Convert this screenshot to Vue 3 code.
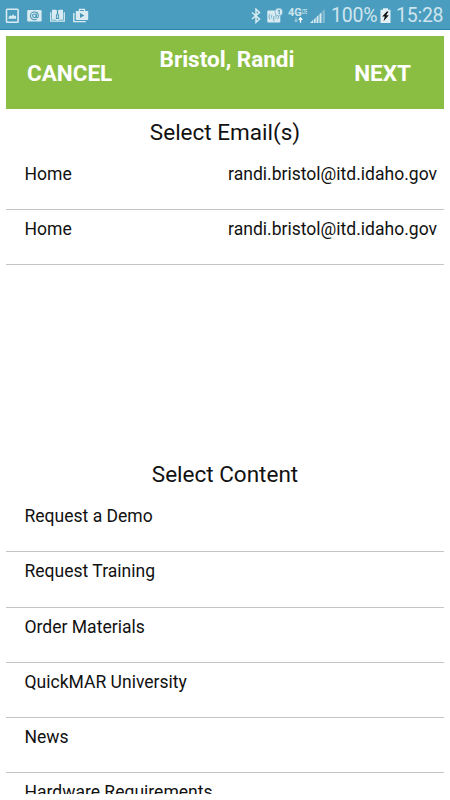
<template>
  <div class="screen">
    <div class="status-bar">
      <div class="status-left">
        <svg class="icon" width="14" height="16" viewBox="0 0 14 16">
          <rect x="1.5" y="1.2" width="11.6" height="13" rx="0.8" fill="none" stroke="#d9ebf2" stroke-width="1.6" />
          <path d="M3.6 10.7V8.9l1.7-1.7 1.2 1.1 1.5-2 1.4 1.7.8-.5.9 1.1v2.1z" fill="#d9ebf2" />
        </svg>
        <svg class="icon" width="15" height="14" viewBox="0 0 15 14">
          <rect x="0.2" y="1" width="14.4" height="11.6" rx="1.2" fill="#d9ebf2" />
          <circle cx="7.4" cy="6.8" r="1.8" fill="none" stroke="#4595b4" stroke-width="1.1" />
          <path d="M9.3 4.8v3c0 1.4 2 1.2 2-1 0-2.2-1.7-3.8-3.9-3.8S3.5 4.7 3.5 6.8s1.7 3.9 3.9 3.9c.8 0 1.5-.2 2.1-.5" fill="none" stroke="#4595b4" stroke-width="1.1" />
        </svg>
        <svg class="icon" width="15" height="14" viewBox="0 0 15 14">
          <path d="M.7 3.2v9h13.6v-9" fill="none" stroke="#d9ebf2" stroke-width="1.2" />
          <path d="M2 .7h3.9l1.6 1.2L9.1.7H13v10.1H9.1L7.5 12l-1.6-1.200H2z" fill="#d9ebf2" />
          <path d="M6.9 1.9h1.2v2.3l1 2.3v3.5H5.9V6.5l1-2.3z" fill="#4595b4" />
          <path d="M7.5 5.6v3.2M6.7 7.7l.8 1.1.8-1.1" fill="none" stroke="#d9ebf2" stroke-width=".8" />
        </svg>
        <svg class="icon" width="16" height="15" viewBox="0 0 16 15">
          <path d="M.8 5v8.6h12" fill="none" stroke="#d9ebf2" stroke-width="1.4" />
          <path d="M6.5 3.2V1.3h5v1.9" fill="none" stroke="#d9ebf2" stroke-width="1.3" />
          <rect x="2.8" y="3" width="12.4" height="8.9" rx=".6" fill="#d9ebf2" />
          <path d="M7 4.9v5.2l4.3-2.6z" fill="#4595b4" />
        </svg>
      </div>

      <div class="status-right">
        <svg class="icon bluetooth" width="10" height="16" viewBox="0 0 10 16">
          <path d="M1 4.5l7.5 6.500-3.500 3.300V1.200L8.500 4.500 1 11" fill="none" stroke="#d9ebf2" stroke-width="1.5" />
        </svg>
        <svg class="icon wifi" width="16" height="16" viewBox="0 0 16 16">
          <rect x=".3" y="2.6" width="13" height="12" rx=".8" fill="#d9ebf2" />
          <path d="M3 5.900c-1.300 2-1.300 3.800 0 5.500M5 6.800c-.7 1.300-.7 2.500 0 3.600M10.500 5.900c1.300 2 1.300 3.800 0 5.500M8.500 6.800c.7 1.300.7 2.500 0 3.600M6.800 8v5.300" fill="none" stroke="#4595b4" stroke-width=".7" />
          <circle cx="11.8" cy="4" r="3.9" fill="#d9ebf2" stroke="#4595b4" stroke-width=".5" />
          <path d="M10.900 2.900l1.300-.9v4.300" fill="none" stroke="#4595b4" stroke-width="1" />
        </svg>
        <div class="network">
          <span class="network-name">4G<small>LTE</small></span>
          <svg width="10" height="6" viewBox="0 0 10 6">
            <path d="M3 .5v4M1.500 3L3 5l1.500-2" fill="none" stroke="#a9d0e0" stroke-width="1" />
            <path d="M7.500 5.700V2M5.800 2.800L7.500.7l1.700 2.100" fill="none" stroke="#fff" stroke-width="1.3" />
          </svg>
        </div>
        <svg class="icon signal" width="16" height="16" viewBox="0 0 16 16">
          <path d="M0 15l3-2.900V15zM3.700 11.700l2-1.900V15h-2zM6.500 9l2-2v8h-2zM9.500 6.300l2-2V15h-2z" fill="#d9ebf2" />
          <path d="M12.600 3.300l2.200-2.200V15h-2.200z" fill="#84bcd2" />
        </svg>
        <span class="percent">100%</span>
        <svg class="icon battery" width="11" height="16" viewBox="0 0 11 16">
          <path d="M3 .3h5v1.5h2.500v13.200H.5V1.800H3z" fill="#e4f2f7" />
          <path d="M6.800 3.500L2.200 8.600h2.600l-1.300 4.600 5.300-6H6.200l2.300-3.700z" fill="#111" />
        </svg>
        <span class="clock">15:28</span>
      </div>
    </div>

    <div class="page">
      <header class="toolbar">
        <button class="toolbar-button cancel">CANCEL</button>
        <h1 class="toolbar-title">Bristol, Randi</h1>
        <button class="toolbar-button next">NEXT</button>
      </header>

      <section class="emails">
        <h2 class="section-title">Select Email(s)</h2>
        <div v-for="(email, index) in emails" :key="index" class="row">
          <span>{{ email.label }}</span>
          <span>{{ email.address }}</span>
        </div>
      </section>

      <section class="contents">
        <h2 class="section-title">Select Content</h2>
        <div v-for="item in contents" :key="item" class="row">
          <span>{{ item }}</span>
        </div>
      </section>
    </div>
  </div>
</template>

<script setup>
const emails = [
  { label: 'Home', address: 'randi.bristol@itd.idaho.gov' },
  { label: 'Home', address: 'randi.bristol@itd.idaho.gov' }
]

const contents = [
  'Request a Demo',
  'Request Training',
  'Order Materials',
  'QuickMAR University',
  'News',
  'Hardware Requirements'
]
</script>

<style>
body {
  background-color: #ffffff;
}
</style>

<style scoped>
.screen {
  width: 450px;
  height: 800px;
  overflow: hidden;
  background-color: #ffffff;
  font-family: Roboto, sans-serif;
  color: #111111;
}

.status-bar {
  height: 30px;
  box-sizing: border-box;
  padding: 0 6px 0 5px;
  display: flex;
  justify-content: space-between;
  background-color: #4a9dbe;
  border-bottom: 1px solid #2785a8;
  color: #cfe5ee;
}

.status-left,
.status-right {
  display: flex;
  align-items: center;
}

.status-left {
  gap: 8px;
  padding-top: 2px;
}

.icon {
  display: block;
  flex-shrink: 0;
}

.status-right {
  padding-top: 3px;
}

.bluetooth {
  margin-right: 6px;
}

.wifi {
  margin-right: 5px;
}

.network {
  width: 20px;
  height: 16px;
  margin-right: 2px;
  display: flex;
  flex-direction: column;
  align-items: center;
}

.network-name {
  display: flex;
  width: 20px;
  font-size: 11px;
  line-height: 9px;
  font-weight: 700;
}

.network-name small {
  width: 6px;
  font-size: 7px;
  line-height: 8px;
  transform: scaleX(0.45);
  transform-origin: left;
}

.signal {
  margin-right: 5px;
}

.percent,
.clock {
  font-size: 19.5px;
  line-height: 26px;
  font-weight: 400;
  letter-spacing: -0.25px;
  white-space: nowrap;
}

.percent {
  width: 46px;
}

.battery {
  margin: 0 5px 0 3px;
}

.clock {
  width: 48px;
}

.page {
  height: 758px;
  margin: 6px 6px 0;
  overflow: hidden;
}

.toolbar {
  height: 72.5px;
  display: grid;
  grid-template-columns: 1fr auto 1fr;
  align-items: center;
  background-color: #8abe43;
  color: #ffffff;
}

.toolbar-button {
  padding: 1px 0 0;
  border: 0;
  background: none;
  color: inherit;
  font-family: inherit;
  font-size: 22.5px;
  line-height: 26px;
  font-weight: 700;
}

.cancel {
  justify-self: start;
  margin-left: 21px;
}

.next {
  justify-self: end;
  margin-right: 33px;
}

.toolbar-title {
  margin: 10px 0 0;
  padding-left: 4px;
  align-self: start;
  font-size: 22.5px;
  line-height: 26px;
  font-weight: 700;
}

.section-title {
  margin: 0;
  padding-top: 10.4px;
  height: 46px;
  box-sizing: border-box;
  text-align: center;
  font-size: 22.5px;
  line-height: 27px;
  font-weight: 400;
}

.emails {
  height: 342.5px;
}

.row {
  height: 55.3px;
  box-sizing: border-box;
  padding: 9px 7px 0 18.5px;
  display: flex;
  justify-content: space-between;
  border-bottom: 1px solid #c4c4c4;
  font-size: 17.55px;
  line-height: 20px;
  white-space: nowrap;
}
</style>
